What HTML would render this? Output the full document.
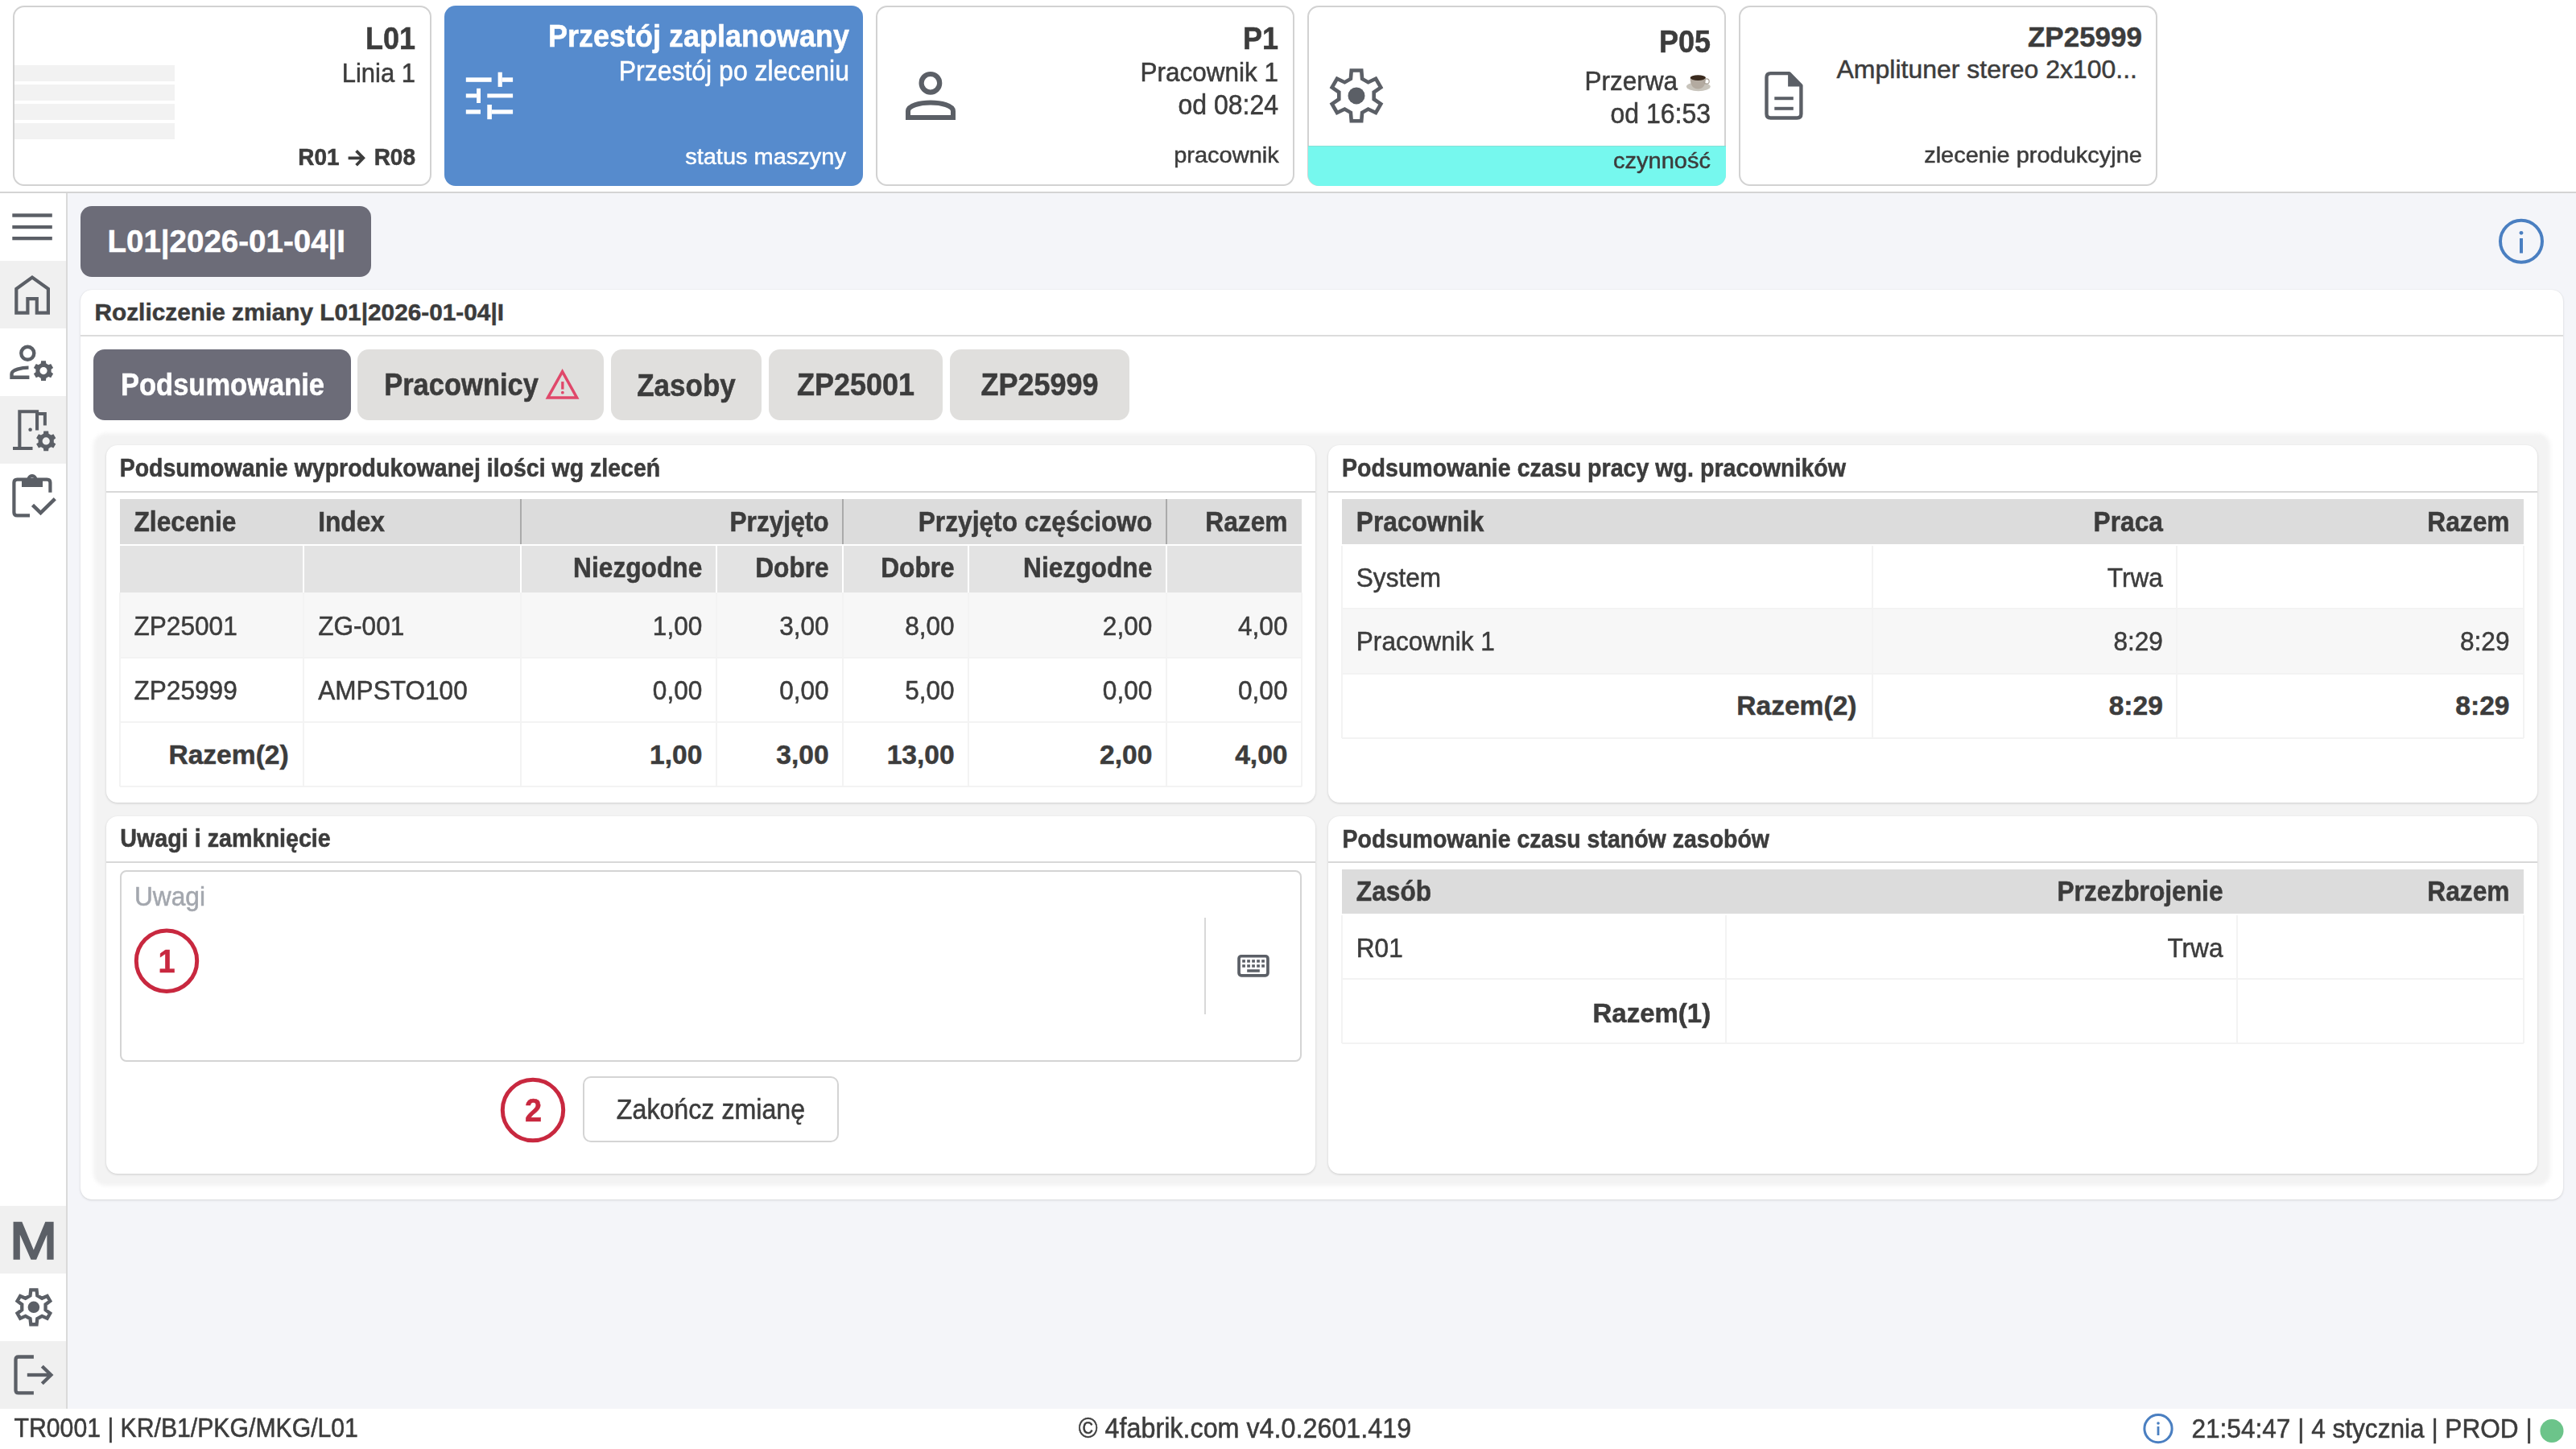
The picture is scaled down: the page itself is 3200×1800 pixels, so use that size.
<!DOCTYPE html>
<html><head><meta charset="utf-8"><title>Rozliczenie zmiany</title>
<style>
html,body{margin:0;padding:0;}
body{width:3200px;height:1800px;overflow:hidden;position:relative;background:#fff;font-family:"Liberation Sans",sans-serif;color:#3c3c3c;}
.a{position:absolute;}
.t{position:absolute;white-space:nowrap;line-height:1;-webkit-text-stroke:0.5px currentColor;}
svg.ov{position:absolute;left:0;top:0;width:3200px;height:1800px;pointer-events:none;}
</style></head><body>
<div class="a" style="left:16.0px;top:7.0px;width:520.0px;height:224.0px;background:#fff;border:2px solid #d2d2d2;border-radius:14px;box-sizing:border-box;overflow:hidden;"></div>
<div class="a" style="left:552.0px;top:7.0px;width:520.0px;height:224.0px;background:#568bcd;border-radius:14px;"></div>
<div class="a" style="left:1088.0px;top:7.0px;width:520.0px;height:224.0px;background:#fff;border:2px solid #d2d2d2;border-radius:14px;box-sizing:border-box;overflow:hidden;"></div>
<div class="a" style="left:1624.0px;top:7.0px;width:520.0px;height:224.0px;background:#fff;border:2px solid #d2d2d2;border-radius:14px;box-sizing:border-box;overflow:hidden;"></div>
<div class="a" style="left:2160.0px;top:7.0px;width:520.0px;height:224.0px;background:#fff;border:2px solid #d2d2d2;border-radius:14px;box-sizing:border-box;overflow:hidden;"></div>
<div class="a" style="left:18.0px;top:81.0px;width:199.0px;height:20.0px;background:#f2f2f2;"></div>
<div class="a" style="left:18.0px;top:105.0px;width:199.0px;height:20.0px;background:#f2f2f2;"></div>
<div class="a" style="left:18.0px;top:129.0px;width:199.0px;height:20.0px;background:#f2f2f2;"></div>
<div class="a" style="left:18.0px;top:153.0px;width:199.0px;height:20.0px;background:#f2f2f2;"></div>
<div class="t" style="top:30.99px;font-size:36px;font-weight:bold;right:2684.00px;transform:scaleY(1.07);transform-origin:0 30.51px;">L01</div>
<div class="t" style="top:75.93px;font-size:31px;right:2684.00px;transform:scaleY(1.07);transform-origin:0 26.27px;">Linia 1</div>
<div class="t" style="top:182.27px;font-size:28px;font-weight:bold;right:2778.30px;transform:scaleY(1.07);transform-origin:0 23.73px;">R01</div>
<div class="t" style="top:182.27px;font-size:28px;font-weight:bold;right:2684.00px;transform:scaleY(1.07);transform-origin:0 23.73px;">R08</div>
<div class="t" style="top:28.49px;font-size:36px;font-weight:bold;color:#ffffff;right:2145.00px;transform:scaleY(1.07);transform-origin:0 30.51px;">Przestój zaplanowany</div>
<div class="t" style="top:72.88px;font-size:32px;color:#ffffff;right:2145.00px;transform:scaleY(1.07);transform-origin:0 27.12px;">Przestój po zleceniu</div>
<div class="t" style="top:180.22px;font-size:29px;color:#ffffff;right:2149.00px;transform:scaleY(0.96);transform-origin:0 24.58px;">status maszyny</div>
<div class="t" style="top:30.99px;font-size:36px;font-weight:bold;right:1612.00px;transform:scaleY(1.07);transform-origin:0 30.51px;">P1</div>
<div class="t" style="top:75.00px;font-size:31.5px;right:1612.00px;transform:scaleY(1.07);transform-origin:0 26.70px;">Pracownik 1</div>
<div class="t" style="top:115.28px;font-size:32px;right:1612.00px;transform:scaleY(1.07);transform-origin:0 27.12px;">od 08:24</div>
<div class="t" style="top:177.72px;font-size:29px;right:1611.30px;transform:scaleY(0.96);transform-origin:0 24.58px;">pracownik</div>
<div class="a" style="left:1624.5px;top:181.0px;width:519.0px;height:50.0px;background:#76f8ee;border-radius:0 0 14px 14px;border-top:1px solid #86e0d6;box-sizing:border-box;"></div>
<div class="t" style="top:35.39px;font-size:36px;font-weight:bold;right:1075.00px;transform:scaleY(1.07);transform-origin:0 30.51px;">P05</div>
<div class="t" style="top:86.30px;font-size:31.5px;right:1116.00px;transform:scaleY(1.07);transform-origin:0 26.70px;">Przerwa</div>
<div class="t" style="top:126.18px;font-size:32px;right:1075.00px;transform:scaleY(1.07);transform-origin:0 27.12px;">od 16:53</div>
<div class="t" style="top:185.42px;font-size:29px;right:1075.00px;transform:scaleY(0.96);transform-origin:0 24.58px;">czynność</div>
<div class="t" style="top:27.94px;font-size:35px;font-weight:bold;right:539.00px;">ZP25999</div>
<div class="t" style="top:69.58px;font-size:32px;right:545.00px;">Amplituner stereo 2x100...</div>
<div class="t" style="top:177.72px;font-size:29px;right:539.00px;transform:scaleY(0.96);transform-origin:0 24.58px;">zlecenie produkcyjne</div>
<div class="a" style="left:0.0px;top:238.0px;width:3200.0px;height:2.0px;background:#d4d4d4;"></div>
<div class="a" style="left:84.0px;top:240.0px;width:3116.0px;height:1510.0px;background:#f4f5f9;"></div>
<div class="a" style="left:82.0px;top:240.0px;width:2.0px;height:1510.0px;background:#dadada;"></div>
<div class="a" style="left:0.0px;top:324.0px;width:82.0px;height:84.0px;background:#f0f0f0;"></div>
<div class="a" style="left:0.0px;top:492.0px;width:82.0px;height:84.0px;background:#f0f0f0;"></div>
<div class="a" style="left:0.0px;top:1498.0px;width:82.0px;height:84.0px;background:#f0f0f0;"></div>
<div class="a" style="left:0.0px;top:1666.0px;width:82.0px;height:84.0px;background:#f0f0f0;"></div>
<div class="a" style="left:100.0px;top:256.0px;width:361.0px;height:88.0px;background:#6c6c78;border-radius:14px;"></div>
<div class="t" style="top:281.17px;font-size:38.5px;font-weight:bold;color:#fff;left:133.50px;">L01|2026-01-04|I</div>
<div class="a" style="left:100.0px;top:359.5px;width:3084.0px;height:1130.5px;background:#fff;border-radius:14px;box-shadow:0 1px 3px rgba(0,0,0,.13),0 0 1px rgba(0,0,0,.10);"></div>
<div class="t" style="top:372.54px;font-size:29.8px;font-weight:bold;left:117.50px;">Rozliczenie zmiany L01|2026-01-04|I</div>
<div class="a" style="left:100.0px;top:416.0px;width:3084.0px;height:2.0px;background:#dcdcdc;"></div>
<div class="a" style="left:116.0px;top:434.0px;width:320.0px;height:88.0px;background:#6c6c78;border-radius:14px;"></div>
<div class="a" style="left:444.0px;top:434.0px;width:306.0px;height:88.0px;background:#e0dfdd;border-radius:14px;"></div>
<div class="a" style="left:759.0px;top:434.0px;width:187.0px;height:88.0px;background:#e0dfdd;border-radius:14px;"></div>
<div class="a" style="left:955.0px;top:434.0px;width:216.0px;height:88.0px;background:#e0dfdd;border-radius:14px;"></div>
<div class="a" style="left:1180.0px;top:434.0px;width:223.0px;height:88.0px;background:#e0dfdd;border-radius:14px;"></div>
<div class="t" style="top:462.06px;font-size:34.5px;font-weight:bold;color:#fff;left:150.00px;transform:scaleY(1.11);transform-origin:0 29.24px;">Podsumowanie</div>
<div class="t" style="top:462.06px;font-size:34.5px;font-weight:bold;left:477.20px;transform:scaleY(1.11);transform-origin:0 29.24px;">Pracownicy</div>
<div class="t" style="top:461.64px;font-size:35px;font-weight:bold;left:-147.50px;width:2000px;text-align:center;transform:scaleY(1.1);transform-origin:0 29.66px;">Zasoby</div>
<div class="t" style="top:460.79px;font-size:36px;font-weight:bold;left:63.00px;width:2000px;text-align:center;transform:scaleY(1.08);transform-origin:0 30.51px;">ZP25001</div>
<div class="t" style="top:460.79px;font-size:36px;font-weight:bold;left:291.50px;width:2000px;text-align:center;transform:scaleY(1.08);transform-origin:0 30.51px;">ZP25999</div>
<div class="a" style="left:116.0px;top:538.0px;width:3052.0px;height:935.0px;background:#f3f3f3;border-radius:16px;filter:blur(2px);"></div>
<div class="a" style="left:132.0px;top:553.0px;width:1502.0px;height:444.0px;background:#fff;border-radius:14px;box-shadow:0 1px 3px rgba(0,0,0,.16);"></div>
<div class="a" style="left:132.0px;top:610.0px;width:1502.0px;height:2.0px;background:#d8d8d8;"></div>
<div class="a" style="left:1650.0px;top:553.0px;width:1502.0px;height:444.0px;background:#fff;border-radius:14px;box-shadow:0 1px 3px rgba(0,0,0,.16);"></div>
<div class="a" style="left:1650.0px;top:610.0px;width:1502.0px;height:2.0px;background:#d8d8d8;"></div>
<div class="a" style="left:132.0px;top:1014.0px;width:1502.0px;height:444.0px;background:#fff;border-radius:14px;box-shadow:0 1px 3px rgba(0,0,0,.16);"></div>
<div class="a" style="left:132.0px;top:1070.0px;width:1502.0px;height:2.0px;background:#d8d8d8;"></div>
<div class="a" style="left:1650.0px;top:1014.0px;width:1502.0px;height:444.0px;background:#fff;border-radius:14px;box-shadow:0 1px 3px rgba(0,0,0,.16);"></div>
<div class="a" style="left:1650.0px;top:1070.0px;width:1502.0px;height:2.0px;background:#d8d8d8;"></div>
<div class="t" style="top:568.15px;font-size:28.5px;font-weight:bold;left:148.70px;transform:scaleY(1.07);transform-origin:0 24.15px;">Podsumowanie wyprodukowanej ilości wg zleceń</div>
<div class="t" style="top:568.06px;font-size:28.6px;font-weight:bold;left:1667.00px;transform:scaleY(1.07);transform-origin:0 24.24px;">Podsumowanie czasu pracy wg. pracowników</div>
<div class="t" style="top:1028.38px;font-size:28.7px;font-weight:bold;left:149.30px;transform:scaleY(1.07);transform-origin:0 24.32px;">Uwagi i zamknięcie</div>
<div class="t" style="top:1028.55px;font-size:28.5px;font-weight:bold;left:1667.50px;transform:scaleY(1.07);transform-origin:0 24.15px;">Podsumowanie czasu stanów zasobów</div>
<div class="a" style="left:148.7px;top:620.0px;width:1468.3px;height:56.0px;background:#dcdcdc;"></div>
<div class="a" style="left:148.7px;top:678.0px;width:1468.3px;height:58.0px;background:#e3e3e3;"></div>
<div class="a" style="left:148.7px;top:736.0px;width:1468.3px;height:81.0px;background:#f7f7f7;"></div>
<div class="a" style="left:376.4px;top:678.0px;width:2.0px;height:58.0px;background:#fff;"></div>
<div class="a" style="left:376.4px;top:736.0px;width:2.0px;height:241.0px;background:#f3f3f3;"></div>
<div class="a" style="left:645.6px;top:678.0px;width:2.0px;height:58.0px;background:#fff;"></div>
<div class="a" style="left:645.6px;top:736.0px;width:2.0px;height:241.0px;background:#f3f3f3;"></div>
<div class="a" style="left:888.8px;top:678.0px;width:2.0px;height:58.0px;background:#fff;"></div>
<div class="a" style="left:888.8px;top:736.0px;width:2.0px;height:241.0px;background:#f3f3f3;"></div>
<div class="a" style="left:1046.2px;top:678.0px;width:2.0px;height:58.0px;background:#fff;"></div>
<div class="a" style="left:1046.2px;top:736.0px;width:2.0px;height:241.0px;background:#f3f3f3;"></div>
<div class="a" style="left:1202.2px;top:678.0px;width:2.0px;height:58.0px;background:#fff;"></div>
<div class="a" style="left:1202.2px;top:736.0px;width:2.0px;height:241.0px;background:#f3f3f3;"></div>
<div class="a" style="left:1447.8px;top:678.0px;width:2.0px;height:58.0px;background:#fff;"></div>
<div class="a" style="left:1447.8px;top:736.0px;width:2.0px;height:241.0px;background:#f3f3f3;"></div>
<div class="a" style="left:645.6px;top:620.0px;width:2.0px;height:56.0px;background:#aaaaaa;"></div>
<div class="a" style="left:1046.2px;top:620.0px;width:2.0px;height:56.0px;background:#aaaaaa;"></div>
<div class="a" style="left:1447.8px;top:620.0px;width:2.0px;height:56.0px;background:#aaaaaa;"></div>
<div class="a" style="left:148.7px;top:816.0px;width:1468.3px;height:2.0px;background:#f3f3f3;"></div>
<div class="a" style="left:148.7px;top:896.0px;width:1468.3px;height:2.0px;background:#f3f3f3;"></div>
<div class="a" style="left:148.7px;top:976.0px;width:1468.3px;height:2.0px;background:#f3f3f3;"></div>
<div class="a" style="left:147.7px;top:736.0px;width:2.0px;height:241.0px;background:#f3f3f3;"></div>
<div class="a" style="left:1616.0px;top:736.0px;width:2.0px;height:241.0px;background:#f3f3f3;"></div>
<div class="t" style="top:633.63px;font-size:31.7px;font-weight:bold;left:166.50px;transform:scaleY(1.1);transform-origin:0 26.87px;">Zlecenie</div>
<div class="t" style="top:633.63px;font-size:31.7px;font-weight:bold;left:395.20px;transform:scaleY(1.1);transform-origin:0 26.87px;">Index</div>
<div class="t" style="top:633.63px;font-size:31.7px;font-weight:bold;right:2170.30px;transform:scaleY(1.1);transform-origin:0 26.87px;">Przyjęto</div>
<div class="t" style="top:633.63px;font-size:31.7px;font-weight:bold;right:1768.70px;transform:scaleY(1.1);transform-origin:0 26.87px;">Przyjęto częściowo</div>
<div class="t" style="top:633.63px;font-size:31.7px;font-weight:bold;right:1600.50px;transform:scaleY(1.1);transform-origin:0 26.87px;">Razem</div>
<div class="t" style="top:691.43px;font-size:31.7px;font-weight:bold;right:2327.70px;transform:scaleY(1.1);transform-origin:0 26.87px;">Niezgodne</div>
<div class="t" style="top:691.43px;font-size:31.7px;font-weight:bold;right:2170.30px;transform:scaleY(1.1);transform-origin:0 26.87px;">Dobre</div>
<div class="t" style="top:691.43px;font-size:31.7px;font-weight:bold;right:2014.30px;transform:scaleY(1.1);transform-origin:0 26.87px;">Dobre</div>
<div class="t" style="top:691.43px;font-size:31.7px;font-weight:bold;right:1768.70px;transform:scaleY(1.1);transform-origin:0 26.87px;">Niezgodne</div>
<div class="t" style="top:762.92px;font-size:31.6px;left:166.50px;transform:scaleY(1.07);transform-origin:0 26.78px;">ZP25001</div>
<div class="t" style="top:762.92px;font-size:31.6px;left:395.20px;transform:scaleY(1.07);transform-origin:0 26.78px;">ZG-001</div>
<div class="t" style="top:762.92px;font-size:31.6px;right:2327.70px;transform:scaleY(1.07);transform-origin:0 26.78px;">1,00</div>
<div class="t" style="top:762.92px;font-size:31.6px;right:2170.30px;transform:scaleY(1.07);transform-origin:0 26.78px;">3,00</div>
<div class="t" style="top:762.92px;font-size:31.6px;right:2014.30px;transform:scaleY(1.07);transform-origin:0 26.78px;">8,00</div>
<div class="t" style="top:762.92px;font-size:31.6px;right:1768.70px;transform:scaleY(1.07);transform-origin:0 26.78px;">2,00</div>
<div class="t" style="top:762.92px;font-size:31.6px;right:1600.50px;transform:scaleY(1.07);transform-origin:0 26.78px;">4,00</div>
<div class="t" style="top:842.52px;font-size:31.6px;left:166.50px;transform:scaleY(1.07);transform-origin:0 26.78px;">ZP25999</div>
<div class="t" style="top:842.52px;font-size:31.6px;left:395.20px;transform:scaleY(1.07);transform-origin:0 26.78px;">AMPSTO100</div>
<div class="t" style="top:842.52px;font-size:31.6px;right:2327.70px;transform:scaleY(1.07);transform-origin:0 26.78px;">0,00</div>
<div class="t" style="top:842.52px;font-size:31.6px;right:2170.30px;transform:scaleY(1.07);transform-origin:0 26.78px;">0,00</div>
<div class="t" style="top:842.52px;font-size:31.6px;right:2014.30px;transform:scaleY(1.07);transform-origin:0 26.78px;">5,00</div>
<div class="t" style="top:842.52px;font-size:31.6px;right:1768.70px;transform:scaleY(1.07);transform-origin:0 26.78px;">0,00</div>
<div class="t" style="top:842.52px;font-size:31.6px;right:1600.50px;transform:scaleY(1.07);transform-origin:0 26.78px;">0,00</div>
<div class="t" style="top:920.62px;font-size:33.6px;font-weight:bold;right:2841.30px;">Razem(2)</div>
<div class="t" style="top:920.62px;font-size:33.6px;font-weight:bold;right:2327.70px;">1,00</div>
<div class="t" style="top:920.62px;font-size:33.6px;font-weight:bold;right:2170.30px;">3,00</div>
<div class="t" style="top:920.62px;font-size:33.6px;font-weight:bold;right:2014.30px;">13,00</div>
<div class="t" style="top:920.62px;font-size:33.6px;font-weight:bold;right:1768.70px;">2,00</div>
<div class="t" style="top:920.62px;font-size:33.6px;font-weight:bold;right:1600.50px;">4,00</div>
<div class="a" style="left:1667.0px;top:620.0px;width:1468.0px;height:56.0px;background:#dcdcdc;"></div>
<div class="a" style="left:1667.0px;top:756.0px;width:1468.0px;height:81.0px;background:#f7f7f7;"></div>
<div class="a" style="left:2325.0px;top:678.0px;width:2.0px;height:239.0px;background:#f3f3f3;"></div>
<div class="a" style="left:2703.4px;top:678.0px;width:2.0px;height:239.0px;background:#f3f3f3;"></div>
<div class="a" style="left:1667.0px;top:755.0px;width:1468.0px;height:2.0px;background:#f3f3f3;"></div>
<div class="a" style="left:1667.0px;top:836.0px;width:1468.0px;height:2.0px;background:#f3f3f3;"></div>
<div class="a" style="left:1667.0px;top:916.0px;width:1468.0px;height:2.0px;background:#f3f3f3;"></div>
<div class="a" style="left:1666.0px;top:678.0px;width:2.0px;height:239.0px;background:#f3f3f3;"></div>
<div class="a" style="left:3134.0px;top:678.0px;width:2.0px;height:239.0px;background:#f3f3f3;"></div>
<div class="t" style="top:633.63px;font-size:31.7px;font-weight:bold;left:1684.80px;transform:scaleY(1.1);transform-origin:0 26.87px;">Pracownik</div>
<div class="t" style="top:633.63px;font-size:31.7px;font-weight:bold;right:513.10px;transform:scaleY(1.1);transform-origin:0 26.87px;">Praca</div>
<div class="t" style="top:633.63px;font-size:31.7px;font-weight:bold;right:82.50px;transform:scaleY(1.1);transform-origin:0 26.87px;">Razem</div>
<div class="t" style="top:702.92px;font-size:31.6px;left:1684.80px;transform:scaleY(1.07);transform-origin:0 26.78px;">System</div>
<div class="t" style="top:702.92px;font-size:31.6px;right:513.10px;transform:scaleY(1.07);transform-origin:0 26.78px;">Trwa</div>
<div class="t" style="top:782.42px;font-size:31.6px;left:1684.80px;transform:scaleY(1.07);transform-origin:0 26.78px;">Pracownik 1</div>
<div class="t" style="top:782.42px;font-size:31.6px;right:513.10px;transform:scaleY(1.07);transform-origin:0 26.78px;">8:29</div>
<div class="t" style="top:782.42px;font-size:31.6px;right:82.50px;transform:scaleY(1.07);transform-origin:0 26.78px;">8:29</div>
<div class="t" style="top:860.32px;font-size:33.6px;font-weight:bold;right:893.50px;">Razem(2)</div>
<div class="t" style="top:860.32px;font-size:33.6px;font-weight:bold;right:513.10px;">8:29</div>
<div class="t" style="top:860.32px;font-size:33.6px;font-weight:bold;right:82.50px;">8:29</div>
<div class="a" style="left:1667.0px;top:1080.0px;width:1468.0px;height:55.4px;background:#dcdcdc;"></div>
<div class="a" style="left:2142.5px;top:1137.0px;width:2.0px;height:159.3px;background:#f3f3f3;"></div>
<div class="a" style="left:2778.0px;top:1137.0px;width:2.0px;height:159.3px;background:#f3f3f3;"></div>
<div class="a" style="left:1667.0px;top:1215.4px;width:1468.0px;height:2.0px;background:#f3f3f3;"></div>
<div class="a" style="left:1667.0px;top:1295.3px;width:1468.0px;height:2.0px;background:#f3f3f3;"></div>
<div class="a" style="left:1666.0px;top:1137.0px;width:2.0px;height:159.3px;background:#f3f3f3;"></div>
<div class="a" style="left:3134.0px;top:1137.0px;width:2.0px;height:159.3px;background:#f3f3f3;"></div>
<div class="t" style="top:1093.43px;font-size:31.7px;font-weight:bold;left:1684.80px;transform:scaleY(1.1);transform-origin:0 26.87px;">Zasób</div>
<div class="t" style="top:1093.43px;font-size:31.7px;font-weight:bold;right:438.50px;transform:scaleY(1.1);transform-origin:0 26.87px;">Przezbrojenie</div>
<div class="t" style="top:1093.43px;font-size:31.7px;font-weight:bold;right:82.50px;transform:scaleY(1.1);transform-origin:0 26.87px;">Razem</div>
<div class="t" style="top:1162.82px;font-size:31.6px;left:1684.80px;transform:scaleY(1.07);transform-origin:0 26.78px;">R01</div>
<div class="t" style="top:1162.82px;font-size:31.6px;right:438.50px;transform:scaleY(1.07);transform-origin:0 26.78px;">Trwa</div>
<div class="t" style="top:1242.03px;font-size:33px;font-weight:bold;right:1074.80px;transform:scaleY(1.03);transform-origin:0 27.97px;">Razem(1)</div>
<div class="a" style="left:148.6px;top:1081.0px;width:1468.4px;height:238.0px;border:2px solid #d4d4d4;border-radius:8px;box-sizing:border-box;background:#fff;"></div>
<div class="t" style="top:1098.73px;font-size:31.7px;color:#a3a7ae;left:166.90px;transform:scaleY(1.07);transform-origin:0 26.87px;">Uwagi</div>
<div class="a" style="left:1496.0px;top:1140.0px;width:2.0px;height:120.0px;background:#d8d8d8;"></div>
<div class="t" style="top:1176.10px;font-size:38px;font-weight:bold;color:#c8283f;left:-793.00px;width:2000px;text-align:center;transform:scaleY(1.07);transform-origin:0 32.20px;">1</div>
<div class="t" style="top:1361.00px;font-size:38px;font-weight:bold;color:#c8283f;left:-337.40px;width:2000px;text-align:center;transform:scaleY(1.07);transform-origin:0 32.20px;">2</div>
<div class="a" style="left:724.0px;top:1336.5px;width:318.0px;height:82.5px;border:2px solid #d4d4d4;border-radius:10px;box-sizing:border-box;background:#fff;"></div>
<div class="t" style="top:1363.01px;font-size:32.2px;left:-117.00px;width:2000px;text-align:center;transform:scaleY(1.07);transform-origin:0 27.29px;">Zakończ zmianę</div>
<div class="t" style="top:1760.41px;font-size:30.2px;left:17.60px;transform:scaleY(1.07);transform-origin:0 25.59px;">TR0001 | KR/B1/PKG/MKG/L01</div>
<div class="t" style="top:1758.63px;font-size:32.3px;left:1339.80px;transform:scaleY(1.07);transform-origin:0 27.37px;">© 4fabrik.com v4.0.2601.419</div>
<div class="t" style="top:1759.62px;font-size:31.6px;left:2722.40px;transform:scaleY(1.07);transform-origin:0 26.78px;">21:54:47 | 4 stycznia | PROD |</div>
<svg class="ov" width="3200" height="1800" viewBox="0 0 3200 1800">
<path d="M432.6 196.3 H449.5 M442.6 187.4 L451.3 196.3 L442.6 205.2" fill="none" stroke="#3c3c3c" stroke-width="3.7"/>
<rect x="578.8" y="96.3" width="31.80" height="5.50" fill="#fff"/>
<rect x="618.6" y="89.7" width="5.20" height="18.20" fill="#fff"/>
<rect x="623.8" y="96.3" width="13.30" height="5.50" fill="#fff"/>
<rect x="578.8" y="116.4" width="13.30" height="5.00" fill="#fff"/>
<rect x="592.1" y="109.8" width="4.90" height="18.20" fill="#fff"/>
<rect x="605.3" y="116.4" width="31.80" height="5.00" fill="#fff"/>
<rect x="578.8" y="136.3" width="18.20" height="5.30" fill="#fff"/>
<rect x="605.3" y="130" width="5.60" height="18.20" fill="#fff"/>
<rect x="610.9" y="136.3" width="26.20" height="5.30" fill="#fff"/>
<circle cx="1155.9" cy="103.3" r="11.3" fill="none" stroke="#5b5f66" stroke-width="6.2"/>
<path d="M1128 146 V138 C1128 131 1143 127.5 1156 127.5 C1169 127.5 1184 131 1184 138 V146 Z" fill="none" stroke="#5b5f66" stroke-width="6"/>
<path d="M1677.90 97.94 L1678.75 87.50 L1691.25 87.50 L1692.10 97.94 L1699.60 102.27 L1709.07 97.79 L1715.32 108.61 L1706.70 114.57 L1706.70 123.23 L1715.32 129.19 L1709.07 140.01 L1699.60 135.53 L1692.10 139.86 L1691.25 150.30 L1678.75 150.30 L1677.90 139.86 L1670.40 135.53 L1660.93 140.01 L1654.68 129.19 L1663.30 123.23 L1663.30 114.57 L1654.68 108.61 L1660.93 97.79 L1670.40 102.27 Z" fill="none" stroke="#5b5f66" stroke-width="4.6" stroke-linejoin="miter"/>
<circle cx="1685" cy="118.9" r="10.5" fill="#5b5f66"/>
<ellipse cx="2109.8" cy="107.6" rx="14.9" ry="5.6" fill="#c8c4bc"/>
<path d="M2099.6 96.6 C2099.6 106 2103 110.5 2109.3 110.5 C2115.6 110.5 2119 106 2119 96.6 Z" fill="#b3aaa0"/>
<ellipse cx="2109.3" cy="96.6" rx="9.6" ry="3.4" fill="#3a2a1e"/>
<circle cx="2120" cy="101" r="3.2" fill="none" stroke="#a8a096" stroke-width="1.2"/>
<path d="M2222.5 91.1 H2199.5 Q2194.5 91.1 2194.5 96.1 V141.5 Q2194.5 146.5 2199.5 146.5 H2232.4 Q2237.4 146.5 2237.4 141.5 V106.3 Z" fill="none" stroke="#5b5f66" stroke-width="4.4" stroke-linejoin="round"/>
<path d="M2221.1 89.5 L2239.2 107.6 H2221.1 Z" fill="#5b5f66"/>
<rect x="2204.3" y="120.2" width="23.5" height="4" fill="#5b5f66"/>
<rect x="2204.3" y="132.8" width="23.5" height="4" fill="#5b5f66"/>
<rect x="15.3" y="265.3" width="49.5" height="4.40" fill="#5b5f66"/>
<rect x="15.3" y="279.9" width="49.5" height="4.30" fill="#5b5f66"/>
<rect x="15.3" y="294" width="49.5" height="4.30" fill="#5b5f66"/>
<path d="M34.4 388.7 V371.2 H45.8 V388.7 H59.9 V358.8 L40 344.6 L20.3 358.8 V388.7 Z" fill="none" stroke="#5b5f66" stroke-width="4.2" stroke-linejoin="miter"/>
<circle cx="34.3" cy="438.8" r="8" fill="none" stroke="#5b5f66" stroke-width="4.4"/>
<path d="M35.5 456.6 C27 456.6 14.5 459.5 14.5 464.5 V468.8 H36.4" fill="none" stroke="#5b5f66" stroke-width="4.4"/>
<path d="M50.70 451.42 L51.10 448.30 L56.90 448.30 L57.30 451.42 L60.30 453.15 L63.20 451.94 L66.10 456.96 L63.60 458.87 L63.60 462.33 L66.10 464.24 L63.20 469.26 L60.30 468.05 L57.30 469.78 L56.90 472.90 L51.10 472.90 L50.70 469.78 L47.70 468.05 L44.80 469.26 L41.90 464.24 L44.40 462.33 L44.40 458.87 L41.90 456.96 L44.80 451.94 L47.70 453.15 Z M49.40 460.60 a4.60 4.60 0 1 0 9.20 0 a4.60 4.60 0 1 0 -9.20 0 Z" fill="#5b5f66" fill-rule="evenodd"/>
<path d="M24.35 558.5 V511.3 H46.05 V534.4" fill="none" stroke="#5b5f66" stroke-width="4.1"/>
<path d="M46 514.1 H55.85 V528.5" fill="none" stroke="#5b5f66" stroke-width="4"/>
<rect x="16" y="555" width="24.5" height="4" fill="#5b5f66"/>
<circle cx="37.6" cy="533.8" r="2.3" fill="#5b5f66"/>
<path d="M53.90 538.72 L54.30 535.60 L60.10 535.60 L60.50 538.72 L63.50 540.45 L66.40 539.24 L69.30 544.26 L66.80 546.17 L66.80 549.63 L69.30 551.54 L66.40 556.56 L63.50 555.35 L60.50 557.08 L60.10 560.20 L54.30 560.20 L53.90 557.08 L50.90 555.35 L48.00 556.56 L45.10 551.54 L47.60 549.63 L47.60 546.17 L45.10 544.26 L48.00 539.24 L50.90 540.45 Z M52.60 547.90 a4.60 4.60 0 1 0 9.20 0 a4.60 4.60 0 1 0 -9.20 0 Z" fill="#5b5f66" fill-rule="evenodd"/>
<path d="M62.4 611.7 V599.6 Q62.4 595.6 58.4 595.6 H21.4 Q17.4 595.6 17.4 599.6 V636.4 Q17.4 640.4 21.4 640.4 H37" fill="none" stroke="#5b5f66" stroke-width="4.2"/>
<rect x="27" y="594" width="26" height="11" fill="#5b5f66"/>
<path d="M33.40 595.50 a6.50 6.50 0 1 0 13.00 0 a6.50 6.50 0 1 0 -13.00 0 Z M37.50 595.50 a2.40 2.40 0 1 0 4.80 0 a2.40 2.40 0 1 0 -4.80 0 Z" fill="#5b5f66" fill-rule="evenodd"/>
<path d="M40.5 627.3 L50.5 637 L68.3 619.6" fill="none" stroke="#5b5f66" stroke-width="4.5"/>
<path d="M16.56 1564.85 L16.56 1517.67 L27.32 1517.67 L41.80 1552.85 L56.29 1517.67 L66.64 1517.67 L66.64 1564.85 L58.36 1564.85 L58.36 1533.81 L45.12 1564.85 L38.49 1564.85 L24.83 1533.81 L24.83 1564.85 Z" fill="#5b5f66"/>
<path d="M37.50 1609.42 L38.30 1602.35 L45.50 1602.35 L46.30 1609.42 L52.15 1612.80 L58.68 1609.96 L62.28 1616.19 L56.55 1620.42 L56.55 1627.18 L62.28 1631.41 L58.68 1637.64 L52.15 1634.80 L46.30 1638.18 L45.50 1645.25 L38.30 1645.25 L37.50 1638.18 L31.65 1634.80 L25.12 1637.64 L21.52 1631.41 L27.25 1627.18 L27.25 1620.42 L21.52 1616.19 L25.12 1609.96 L31.65 1612.80 Z" fill="none" stroke="#5b5f66" stroke-width="4.3"/>
<circle cx="41.9" cy="1623.8" r="7.3" fill="#5b5f66"/>
<path d="M41.9 1685.5 H23 Q19.5 1685.5 19.5 1689 V1726.9 Q19.5 1730.4 23 1730.4 H41.9" fill="none" stroke="#5b5f66" stroke-width="4.3"/>
<path d="M33.8 1708 H63" fill="none" stroke="#5b5f66" stroke-width="4.3"/>
<path d="M52.3 1697.2 L63.4 1708 L52.3 1718.8" fill="none" stroke="#5b5f66" stroke-width="4.3"/>
<circle cx="3132" cy="299.7" r="26" fill="none" stroke="#4a7fc1" stroke-width="4"/>
<circle cx="3132" cy="289.3" r="2.4" fill="#4a7fc1"/>
<rect x="3130" y="296" width="4" height="18.5" fill="#4a7fc1"/>
<path d="M680.6 493.9 L698.6 461.6 L716.6 493.9 Z" fill="none" stroke="#e0486a" stroke-width="3.5" stroke-linejoin="miter"/>
<rect x="697.2" y="474.1" width="3.3" height="9.5" fill="#e0486a"/>
<circle cx="698.85" cy="487.7" r="1.9" fill="#e0486a"/>
<rect x="1539.05" y="1187.75" width="35.9" height="24.1" rx="3" fill="none" stroke="#5b5f66" stroke-width="3.7"/>
<rect x="1543.2" y="1192.2" width="3.7" height="3.5" fill="#5b5f66"/>
<rect x="1549.2" y="1192.2" width="3.7" height="3.5" fill="#5b5f66"/>
<rect x="1555.2" y="1192.2" width="3.7" height="3.5" fill="#5b5f66"/>
<rect x="1561.2" y="1192.2" width="3.7" height="3.5" fill="#5b5f66"/>
<rect x="1567.2" y="1192.2" width="3.7" height="3.5" fill="#5b5f66"/>
<rect x="1543.2" y="1198.2" width="3.7" height="3.5" fill="#5b5f66"/>
<rect x="1549.2" y="1198.2" width="3.7" height="3.5" fill="#5b5f66"/>
<rect x="1555.2" y="1198.2" width="3.7" height="3.5" fill="#5b5f66"/>
<rect x="1561.2" y="1198.2" width="3.7" height="3.5" fill="#5b5f66"/>
<rect x="1567.2" y="1198.2" width="3.7" height="3.5" fill="#5b5f66"/>
<rect x="1549.2" y="1204.2" width="15.6" height="3.5" fill="#5b5f66"/>
<circle cx="207" cy="1193.7" r="37.7" fill="none" stroke="#c8283f" stroke-width="5"/>
<circle cx="662" cy="1379" r="37.7" fill="none" stroke="#c8283f" stroke-width="5"/>
<circle cx="2681" cy="1774.7" r="17.1" fill="none" stroke="#4a7fc1" stroke-width="3"/>
<circle cx="2681" cy="1768" r="1.8" fill="#4a7fc1"/>
<rect x="2679.6" y="1772" width="2.8" height="11" fill="#4a7fc1"/>
<circle cx="3170" cy="1777.5" r="14.5" fill="#6cc48a"/>
</svg>
</body></html>
